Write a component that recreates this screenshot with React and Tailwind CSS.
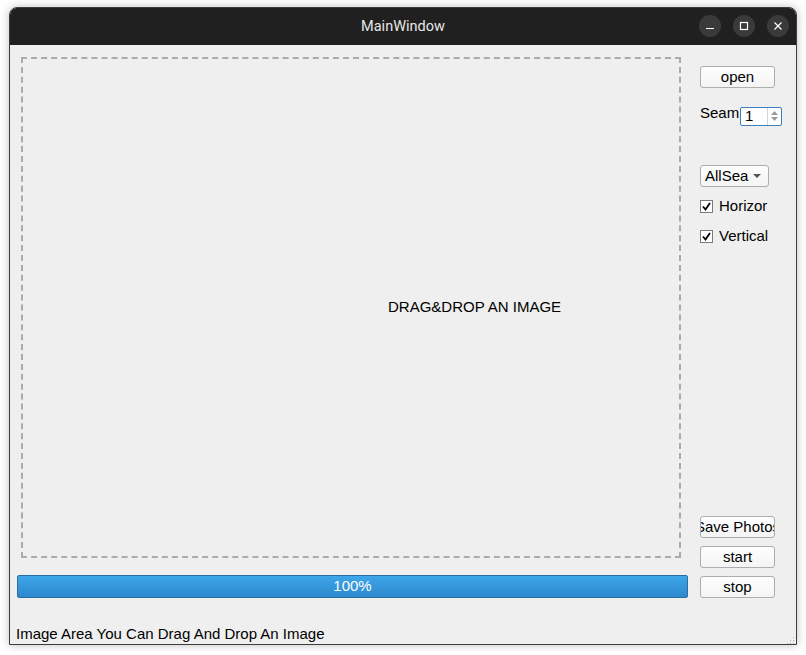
import React from 'react';

const font = { fontFamily: '"Liberation Sans", Arial, sans-serif' };

function Button({ children, className = '' }) {
  return (
    <div className={`flex h-[22px] w-[75px] items-center justify-center overflow-hidden whitespace-nowrap rounded-[3px] border border-[#adadad] bg-gradient-to-b from-[#fefefe] to-[#f4f4f4] text-[15px] text-black ${className}`}>
      {children}
    </div>
  );
}

function Check({ label, className = '' }) {
  return (
    <div className={`flex h-[20px] w-[69px] items-center overflow-hidden whitespace-nowrap ${className}`}>
      <div className="flex h-[13px] w-[13px] shrink-0 items-center justify-center border border-[#7a7a7a] bg-white">
        <svg width="9" height="9" viewBox="0 0 9 9">
          <path d="M1 4.5 L3.5 7.5 L8 1" fill="none" stroke="#000" strokeWidth="1.8" />
        </svg>
      </div>
      <span className="ml-[6px] text-[15px] text-black">{label}</span>
    </div>
  );
}

export default function App() {
  return (
    <div className="h-[655px] w-[806px] bg-white pl-[9px] pt-[7px]" style={font}>
      {/* Window */}
      <div className="flex h-[638px] w-[788px] flex-col overflow-hidden rounded-t-[8px] border border-[#3c3c3c] bg-[#efefef] shadow-[0_0_10px_rgba(0,0,0,0.25)]">
        {/* Title bar */}
        <div className="relative flex h-[37px] shrink-0 items-center justify-center bg-[#202020]">
          <span className="text-[14.5px] text-[#e6e6e6]" style={{ fontFamily: 'Roboto, sans-serif' }}>MainWindow</span>
          <div className="absolute right-[7px] top-[7px] flex gap-[12px]">
            <div className="flex h-[22px] w-[22px] items-center justify-center rounded-full bg-[#3a3a3a]">
              <svg width="10" height="10" viewBox="0 0 10 10"><path d="M1 7.5 H9" stroke="#fff" strokeWidth="1.2" /></svg>
            </div>
            <div className="flex h-[22px] w-[22px] items-center justify-center rounded-full bg-[#3a3a3a]">
              <svg width="10" height="10" viewBox="0 0 10 10"><rect x="1.5" y="1.5" width="7" height="7" fill="none" stroke="#fff" strokeWidth="1.2" /></svg>
            </div>
            <div className="flex h-[22px] w-[22px] items-center justify-center rounded-full bg-[#3a3a3a]">
              <svg width="10" height="10" viewBox="0 0 10 10"><path d="M1.5 1.5 L8.5 8.5 M8.5 1.5 L1.5 8.5" stroke="#fff" strokeWidth="1.2" /></svg>
            </div>
          </div>
        </div>

        {/* Body */}
        <div className="relative flex flex-1 flex-col">
          <div className="flex pl-[7px] pt-[12px]">
            {/* Left column */}
            <div className="flex w-[671px] flex-col">
              <div className="ml-[4px] flex h-[501px] w-[660px] items-center border-2 border-dashed border-[#ababab] pl-[365px]">
                <span className="text-[15px] text-black">DRAG&amp;DROP AN IMAGE</span>
              </div>
              <div className="mt-[17px] flex h-[23px] items-center justify-center rounded-[2px] border border-[#2b6ea3] bg-gradient-to-b from-[#3ea6ea] to-[#2e88cc] text-[15px] text-white">
                100%
              </div>
            </div>

            {/* Right column */}
            <div className="ml-[12px] flex w-[75px] flex-col pt-[9px]">
              <Button>open</Button>
              <div className="mt-[19px] flex h-[18px] w-[82px] items-center">
                <span className="-mt-[6px] w-[40px] overflow-hidden whitespace-nowrap text-[15px] text-black">Seam</span>
                <div className="flex h-[19px] w-[42px] items-center rounded-[2px] border border-[#3b7fbf] bg-white">
                  <span className="ml-[4px] flex-1 text-[15px] text-black">1</span>
                  <div className="flex h-full w-[14px] flex-col items-center justify-center gap-[2px] border-l border-[#d5d5d5]">
                    <svg width="7" height="4" viewBox="0 0 7 4"><path d="M0 4 L3.5 0 L7 4 Z" fill="#9a9a9a" /></svg>
                    <svg width="7" height="4" viewBox="0 0 7 4"><path d="M0 0 L3.5 4 L7 0 Z" fill="#9a9a9a" /></svg>
                  </div>
                </div>
              </div>
              <div className="mt-[40px] flex h-[22px] w-[69px] items-center rounded-[3px] border border-[#adadad] bg-gradient-to-b from-[#fefefe] to-[#f4f4f4] pl-[4px]">
                <span className="text-[15px] text-black">AllSea</span>
                <svg className="ml-[5px]" width="8" height="4" viewBox="0 0 8 4"><path d="M0 0 L4 4 L8 0 Z" fill="#555" /></svg>
              </div>
              <Check label="Horizor" className="mt-[9px]" />
              <Check label="Vertical" className="mt-[10px]" />
              <div className="flex-1" />
              <Button>Save Photos</Button>
              <Button className="mt-[8px]">start</Button>
              <Button className="mt-[8px]">stop</Button>
            </div>
          </div>

          {/* Status bar */}
          <div className="mt-[25px] pl-[6px] text-[15px] text-black">Image Area You Can Drag And Drop An Image</div>

          {/* Size grip */}
          <svg className="absolute bottom-[1px] right-[1px]" width="10" height="10" viewBox="0 0 10 10">
            {[[8, 2], [8, 5], [8, 8], [5, 5], [5, 8], [2, 8]].map(([x, y], i) => (
              <rect key={i} x={x} y={y} width="1" height="1" fill="#b0b0b0" />
            ))}
          </svg>
        </div>
      </div>
    </div>
  );
}
